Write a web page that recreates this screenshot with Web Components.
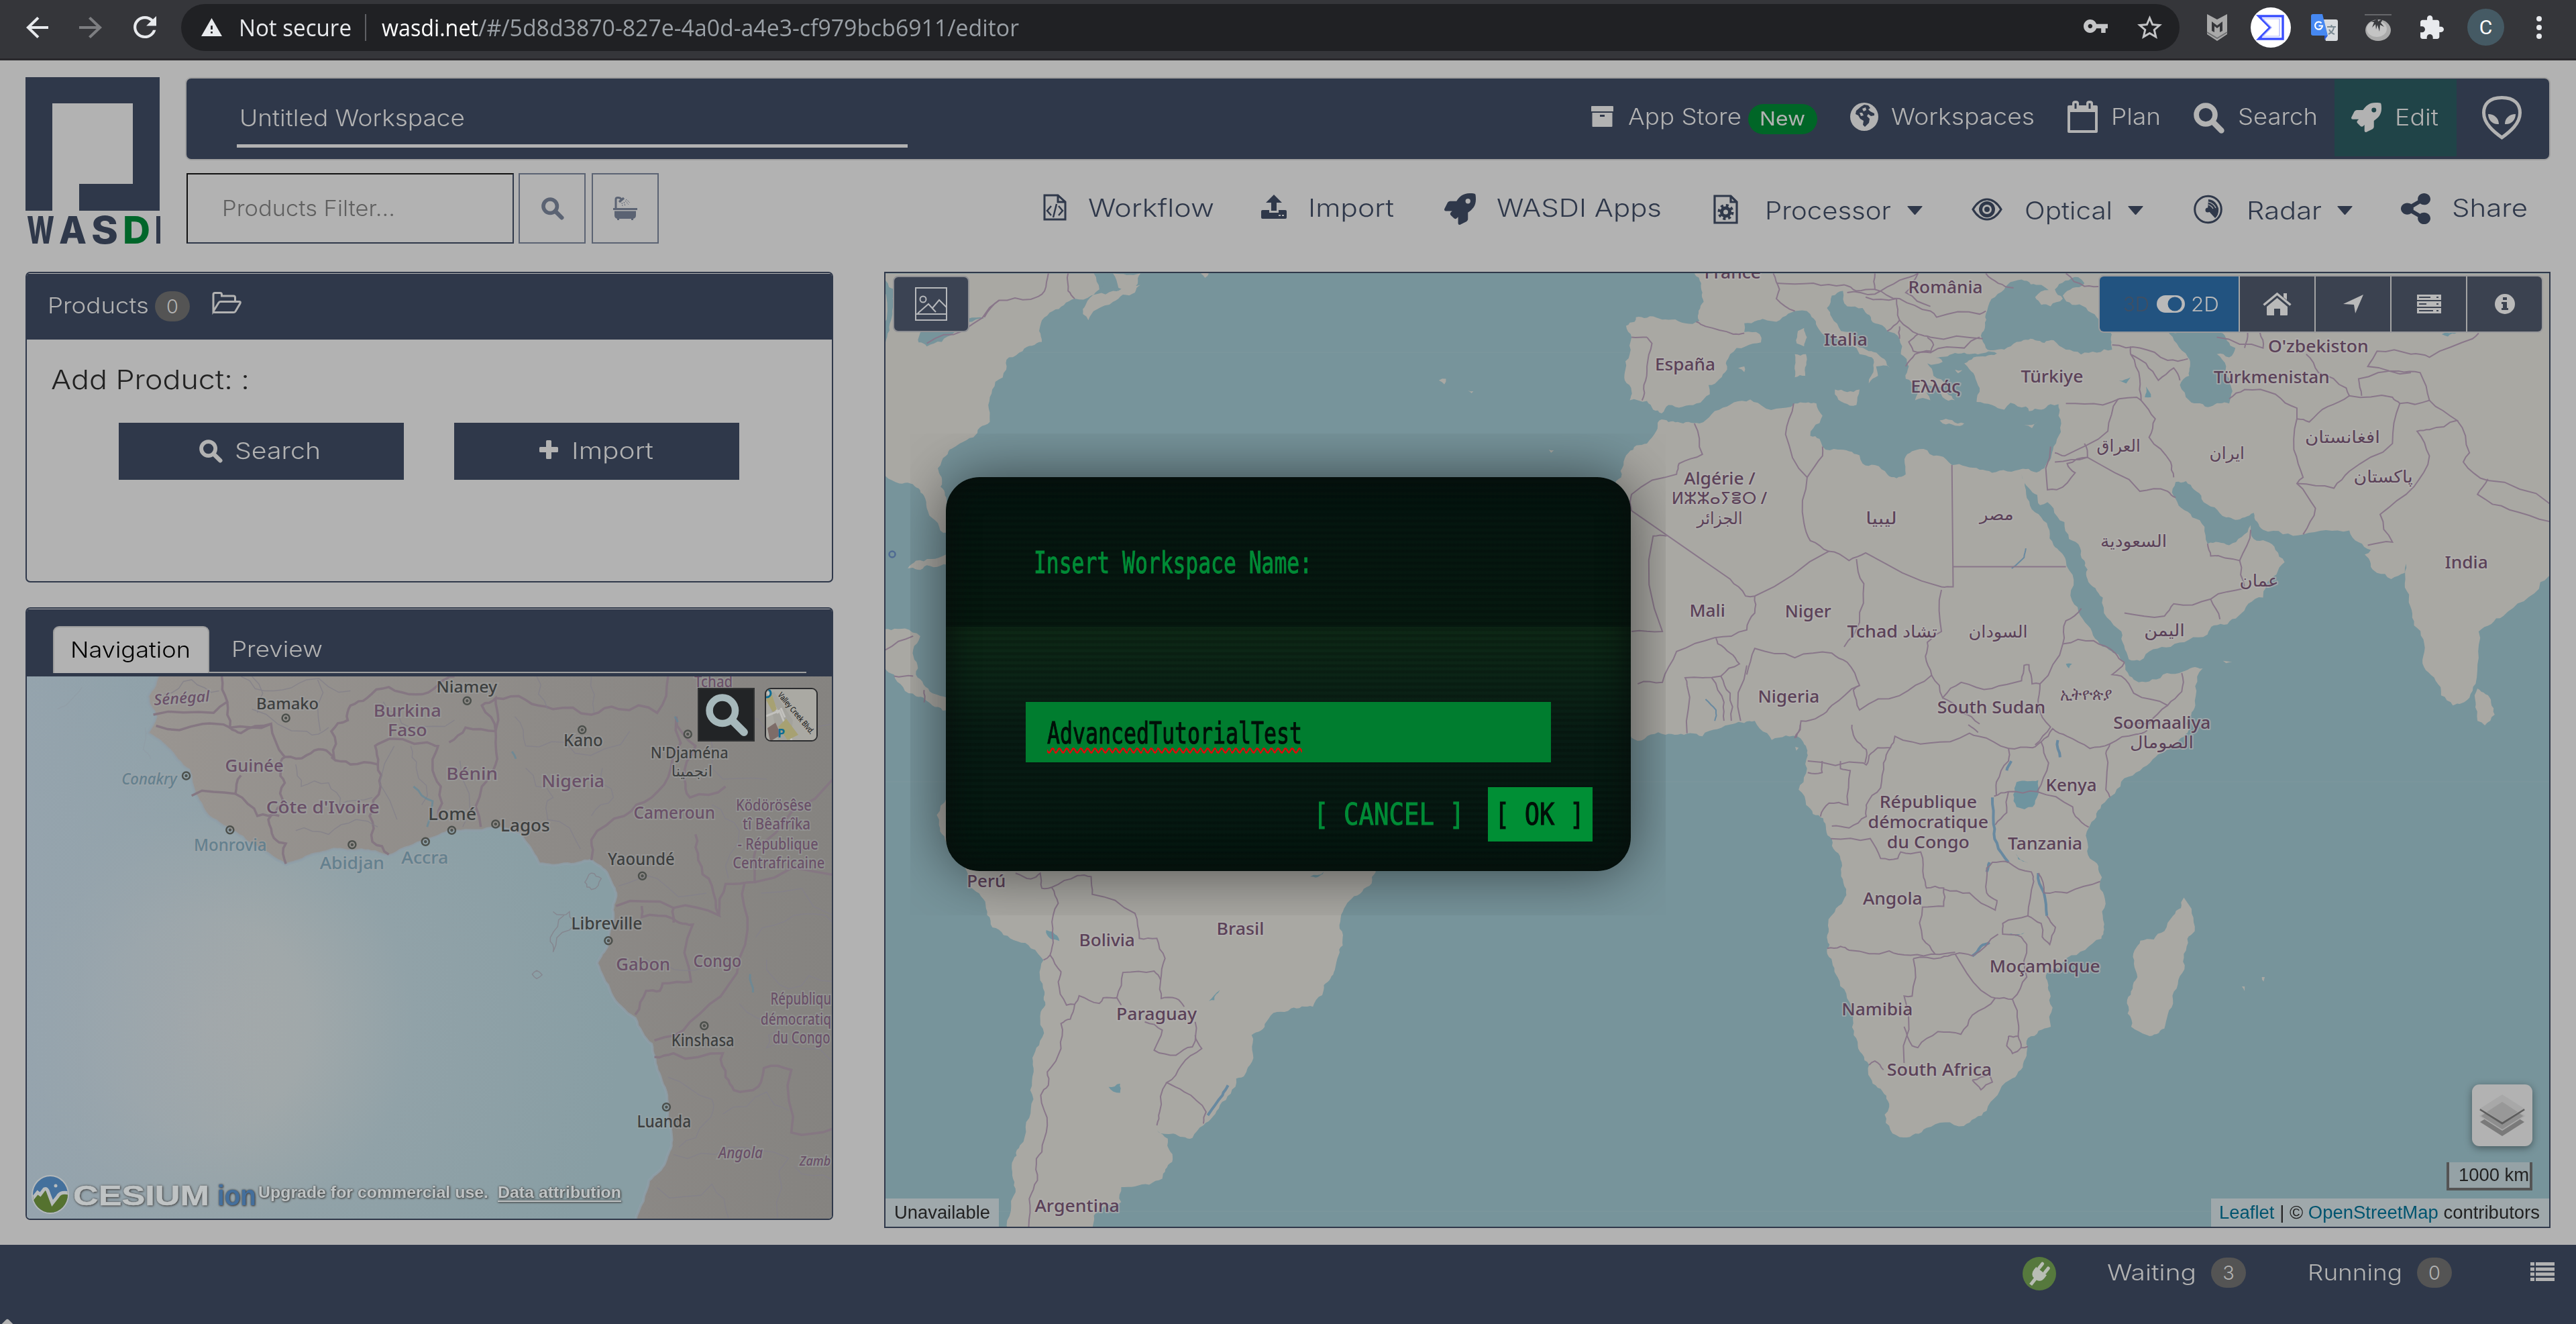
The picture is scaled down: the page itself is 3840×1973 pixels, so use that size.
<!DOCTYPE html>
<html lang="en"><head><meta charset="utf-8"><title>WASDI editor</title>
<style>html,body{margin:0;padding:0}body{width:3840px;height:1973px;overflow:hidden;background:#b2b2b2;font-family:Inter,"Liberation Sans",sans-serif}</style></head>
<body><wasdi-app></wasdi-app>
<script>
const def=(n,css,html,init)=>customElements.define(n,class extends HTMLElement{
  connectedCallback(){ if(this.shadowRoot)return; const r=this.attachShadow({mode:'open'});
    r.innerHTML='<style>*{box-sizing:border-box}'+css+'</style>'+(typeof html==='function'?html(this):html); if(init)init(this,r);}
});

/* Text stretched horizontally to a given width */
const fitted=new Set();
class FitText extends HTMLElement{
  connectedCallback(){ if(!this.shadowRoot){const r=this.attachShadow({mode:'open'});
    r.innerHTML='<style>:host{display:inline-block;flex:none;white-space:nowrap;line-height:1.2}span{display:inline-block;transform-origin:0 50%}</style><span><slot></slot></span>';}
    this.style.width=this.getAttribute('w')+'px'; fitted.add(this);}
  fit(){const s=this.shadowRoot.querySelector('span');s.style.transform='none';const w=s.getBoundingClientRect().width;
    if(w)s.style.transform='scaleX('+(this.getAttribute('w')/w)+')';}
}
customElements.define('fit-text',FitText);

/* Icon set: name -> [viewBox, markup] */
const ROCKET='<path fill="currentColor" d="M505.12 19.09c-1.19-5.53-6.66-11-12.2-12.18C460.7 0 435.5 0 410.4 0 307.18 0 245.27 55.2 199.05 128H94.84c-16.35 0-35.56 11.88-42.89 26.48L2.52 253.3A28.4 28.4 0 0 0 0 264a24 24 0 0 0 24 24h103.8l-22.46 22.47c-11.37 11.36-13 32.26 0 45.25l50.9 50.9c11.16 11.19 32.16 13.16 45.28 0L224 384.16V488a24 24 0 0 0 24 24 28.56 28.56 0 0 0 10.7-2.52l98.73-49.39c14.63-7.3 26.5-26.5 26.5-42.86V312.8c72.6-46.31 128.04-108.4 128.04-211.1 0-25.2 0-50.4-6.85-82.6ZM384.04 168A40 40 0 1 1 424 128a40 40 0 0 1-40 40Z"/>';
const SEARCH='<circle cx="40" cy="40" r="31" fill="none" stroke="currentColor" stroke-width="17"/><path d="M63 63L92 92" stroke="currentColor" stroke-width="19" stroke-linecap="round"/>';
const ICONS={
 back:['4 4 16 16','<path fill="currentColor" d="M20 11H7.83l5.59-5.59L12 4l-8 8 8 8 1.41-1.41L7.83 13H20v-2z"/>'],
 fwd:['4 4 16 16','<path fill="currentColor" d="M4 11h12.17l-5.59-5.59L12 4l8 8-8 8-1.41-1.41L16.17 13H4z"/>'],
 reload:['4 4 16 16','<path fill="currentColor" d="M17.65 6.35C16.2 4.9 14.21 4 12 4c-4.42 0-7.99 3.58-7.99 8s3.57 8 7.99 8c3.73 0 6.84-2.55 7.73-6h-2.08c-.82 2.33-3.04 4-5.65 4-3.31 0-6-2.69-6-6s2.69-6 6-6c1.66 0 3.14.69 4.22 1.78L13 11h7V4l-2.35 2.35z"/>'],
 warn:['1 2 22 19','<path fill="currentColor" d="M1 21h22L12 2 1 21zm12-3h-2v-2h2v2zm0-4h-2v-4h2v4z"/>'],
 key:['1 6 22 12','<path fill="currentColor" d="M12.65 10C11.83 7.67 9.61 6 7 6c-3.31 0-6 2.69-6 6s2.69 6 6 6c2.61 0 4.83-1.67 5.65-4H17v4h4v-4h2v-4H12.65zM7 14c-1.1 0-2-.9-2-2s.9-2 2-2 2 .9 2 2-.9 2-2 2z"/>'],
 star:['2 2 20 19','<path fill="currentColor" d="M22 9.24l-7.19-.62L12 2 9.19 8.63 2 9.24l5.46 4.73L5.82 21 12 17.27 18.18 21l-1.63-7.03L22 9.24zM12 15.4l-3.76 2.27 1-4.28-3.32-2.88 4.38-.38L12 6.1l1.71 4.04 4.38.38-3.32 2.88 1 4.28L12 15.4z"/>'],
 shield:['0 0 30 40','<path fill="#a9a9a9" d="M0 0L15 8 30 0V30L15 40 0 30Z"/><path fill="#35363a" d="M7 11L15 17 23 11V25L19 27V18L15 21 11 18V27L7 25Z"/><path d="M0 27l15 9 15-9" fill="none" stroke="#6f7072" stroke-width="2"/>'],
 sigma:['0 0 60 60','<circle cx="30" cy="30" r="30" fill="#fff"/><path d="M12 13H48V47H12L29 30Z" fill="none" stroke="#394eff" stroke-width="3.4"/><path d="M18 17H43V43H18L31 30Z" fill="none" stroke="#a9b2ff" stroke-width="1.2"/>'],
 trans:['0 0 40 40','<path fill="#d9dcdf" d="M14 8h23a3 3 0 0 1 3 3v26a3 3 0 0 1-3 3H22z"/><path fill="#4688f1" d="M3 0h14l8 32H3a3 3 0 0 1-3-3V3a3 3 0 0 1 3-3z"/><path fill="#2b59d6" d="M20 32h5l-5 7z"/><path d="M15.600 13.500A5.500 5.500 0 1 0 17 17.500H11.500" fill="none" stroke="#fff" stroke-width="2.200"/><path d="M24 19h13M30.500 16v3M34 20c-1 5-4 8-8 10M27 23c2 4 5 6 8 7" fill="none" stroke="#7b8b94" stroke-width="2"/>'],
 tomato:['0 0 40 40','<path d="M0 1h40" stroke="#77787b" stroke-width="1.500"/><ellipse cx="20" cy="24" rx="19" ry="16" fill="#aaa"/><ellipse cx="18" cy="22" rx="15" ry="12" fill="#c4c4c4"/><path d="M19 2l1 9 8-5-4 7 5 6-6-3-1 10-3-10-2 7-1-8-5 5 3-8-5-1 7-2z" fill="#3a3b3e"/>'],
 puzzle:['2 1 21 21','<path fill="currentColor" d="M20.500 11H19V7c0-1.100-.9-2-2-2h-4V3.500C13 2.120 11.880 1 10.500 1S8 2.120 8 3.500V5H4c-1.100 0-1.990.9-1.990 2v3.800H3.500c1.490 0 2.700 1.210 2.700 2.700s-1.210 2.700-2.700 2.700H2V20c0 1.100.9 2 2 2h3.800v-1.500c0-1.490 1.210-2.700 2.700-2.700 1.490 0 2.700 1.210 2.700 2.700V22H17c1.100 0 2-.9 2-2v-4h1.500c1.380 0 2.500-1.120 2.500-2.500S21.880 11 20.500 11z"/>'],
 dots:['0 0 8 34','<g fill="currentColor"><circle cx="4" cy="4" r="4"/><circle cx="4" cy="17" r="4"/><circle cx="4" cy="30" r="4"/></g>'],
 box:['0 0 33 31','<path fill="currentColor" fill-rule="evenodd" d="M0 1Q0 0 1 0H32Q33 0 33 1V8H0ZM1.500 10H31.500V30Q31.500 31 30.500 31H2.500Q1.500 31 1.500 30ZM13 13V16H20V13Z"/>'],
 globe:['0 0 42 42','<circle cx="21" cy="21" r="21" fill="currentColor"/><path fill="#2f384a" d="M16 6L21 3 27 4 30 8 27 10 30 13 36 16 36 19 31 20 27 17 25 20 29 24 28 30 22 36 19 33 20 27 15 24 12 19 8 17 9 12Z"/><path fill="currentColor" d="M18 9L23 7 24 11 20 13ZM14 15L18 15 20 19 16 20Z"/>'],
 cal:['0 0 45 48','<path fill="currentColor" fill-rule="evenodd" d="M2 7H7V4Q7 0 12 0 17 0 17 4V7H28V4Q28 0 33 0 38 0 38 4V7H43Q45 7 45 9V46Q45 48 43 48H2Q0 48 0 46V9Q0 7 2 7ZM4 17V44H41V17ZM10.500 4V12H13.500V4ZM31.500 4V12H34.500V4Z"/>'],
 search:['0 0 100 100',SEARCH], rocket:['0 0 512 512',ROCKET],
 alien:['0 0 59 65','<path d="M29.500 2.500C10 2.500 2.500 13 2.500 25 2.500 41 17 53 29.500 62 42 53 56.500 41 56.500 25 56.500 13 49 2.500 29.500 2.500Z" fill="none" stroke="currentColor" stroke-width="5"/><path d="M9 27C18 27 25 33 25 42 16 43 9 36 9 27ZM50 27C41 27 34 33 34 42 43 43 50 36 50 27Z" fill="currentColor"/>'],
 bath:['0 0 36 35','<g fill="none" stroke="currentColor"><path d="M4 18V4Q4 1.500 7 1.500 11 1.500 12 4" stroke-width="3"/><path d="M9 8L16 2" stroke-width="3.500"/><path d="M13 9l1 5M16 8l2 6M18 6l5 6M19 4l6 5" stroke-width="1" stroke-dasharray="2 1.500"/></g><path fill="currentColor" d="M0 17H36V20H0ZM2 21.500H34V28Q34 32 30 33V35H27V33H9V35H6V33Q2 32 2 28Z"/>'],
 code:['0 0 35 40','<path d="M2 2H22L33 12V38H2ZM22 2V12H33" fill="none" stroke="currentColor" stroke-width="3"/><path d="M12 18l-6 7 6 7M23 18l6 7-6 7M20 15l-5 20" fill="none" stroke="currentColor" stroke-width="2.500"/>'],
 upload:['0 0 38 36','<path fill="currentColor" fill-rule="evenodd" d="M19 0L31 12H23V24H15V12H7ZM2 23H12V27H26V23H36Q38 23 38 25V34Q38 36 36 36H2Q0 36 0 34V25Q0 23 2 23ZM26 30V32H29V30ZM31 30V32H34V30Z"/>'],
 gearfile:['0 0 37 44','<path d="M2 2H26L35 11V42H2ZM26 2V11H35" fill="none" stroke="currentColor" stroke-width="3.200"/><circle cx="18.500" cy="26" r="6" fill="none" stroke="currentColor" stroke-width="5"/><circle cx="18.500" cy="26" r="10" fill="none" stroke="currentColor" stroke-width="4" stroke-dasharray="4 3.850"/>'],
 eye:['0 0 46 34','<path d="M2 17Q11 2 23 2 35 2 44 17 35 32 23 32 11 32 2 17Z" fill="none" stroke="currentColor" stroke-width="3.200"/><circle cx="23" cy="17" r="9.500" fill="none" stroke="currentColor" stroke-width="5"/><circle cx="23" cy="17" r="4" fill="currentColor"/>'],
 radar:['0 0 43 44','<circle cx="21.500" cy="22" r="19.800" fill="none" stroke="currentColor" stroke-width="3"/><path fill="currentColor" d="M21 23L22 7Q33 8 37 20 38 30 32 35Z"/><g fill="none" stroke="#b2b2b2" stroke-width="1.200"><path d="M22 11Q30 13 33 20M22 15Q27 17 29 21"/></g><circle cx="21" cy="23" r="3.500" fill="currentColor"/>'],
 share:['0 0 448 512','<path fill="currentColor" d="M352 320c-22.608 0-43.387 7.819-59.790 20.895l-102.486-64.054a96.551 96.551 0 0 0 0-41.683l102.486-64.054C308.613 184.181 329.392 192 352 192c53.019 0 96-42.981 96-96S405.019 0 352 0s-96 42.981-96 96c0 7.158.790 14.130 2.276 20.841L155.790 180.895C139.387 167.819 118.608 160 96 160c-53.019 0-96 42.981-96 96s42.981 96 96 96c22.608 0 43.387-7.819 59.790-20.895l102.486 64.054A96.301 96.301 0 0 0 256 416c0 53.019 42.981 96 96 96s96-42.981 96-96-42.981-96-96-96z"/>'],
 caret:['0 0 23 13','<path fill="currentColor" d="M1 0H22Q23 0 22.500 1L12.500 12.500Q11.500 13.500 10.500 12.500L.5 1Q0 0 1 0Z"/>'],
 folder:['0 0 44 32','<path d="M2 29V4Q2 1.500 4.500 1.500H12Q14.500 1.500 14.500 4V6H32Q34.500 6 34.500 8.500V14M2 29L10 16Q11 14.500 13 14.500H41Q43 14.500 42 17L35 29Q34 30.500 32 30.500H4Q2 30.500 2 28Z" fill="none" stroke="currentColor" stroke-width="3"/>'],
 plus:['0 0 28 28','<path fill="currentColor" d="M10 1.500Q10 0 11.500 0H16.500Q18 0 18 1.500V10H26.500Q28 10 28 11.500V16.500Q28 18 26.500 18H18V26.500Q18 28 16.500 28H11.500Q10 28 10 26.500V18H1.500Q0 18 0 16.500V11.500Q0 10 1.500 10H10Z"/>'],
 picture:['0 0 48 50','<g fill="none" stroke="currentColor" stroke-width="2"><path d="M1 1H47V49H1ZM1 40H47M4 39L20 25 31 37M26 31L36 19 47 30"/><circle cx="12" cy="18" r="4.500"/></g>'],
 toggle:['0 0 42 26','<rect width="42" height="26" rx="13" fill="currentColor"/><circle cx="27" cy="13" r="10.500" fill="#225380"/>'],
 home:['0 0 43 34','<path fill="currentColor" d="M21.500 8L37 21V33Q37 34 36 34H26V24H17V34H7Q6 34 6 33V21Z"/><path d="M1.500 18.500L21.500 2 41.500 18.500" fill="none" stroke="currentColor" stroke-width="3.500"/><path fill="currentColor" d="M31 1H36V11L31 7Z"/>'],
 locate:['0 0 30 28','<path fill="currentColor" d="M30 0L18 28 16 15 0 14Z"/>'],
 server:['0 0 36 28','<path fill="currentColor" fill-rule="evenodd" d="M0 0H36V8H0ZM0 10H36V18H0ZM0 20H36V28H0ZM3 3H20V5H3ZM3 13H14V15H3ZM3 23H24V25H3ZM29 3H32V5H29ZM29 13H32V15H29ZM29 23H32V25H29Z"/>'],
 info:['0 0 30 30','<circle cx="15" cy="15" r="15" fill="currentColor"/><path fill="#3b4250" d="M12 5H18V9H12ZM10 12H18V21H20V24H10V21H12V15H10Z"/>'],
 layers:['0 0 66 62','<path d="M33 20L66 41 33 62 0 41Z" fill="#7a7a7a"/><path d="M33 11L66 32 33 53 0 32Z" fill="#8e8e8e" stroke="#a9a9a9" stroke-width="1.500"/><path d="M0 22L33 43 66 22" fill="none" stroke="#5d5d5d" stroke-width="3"/><path d="M33 0L66 21 33 41 0 21Z" fill="#a8a8a8"/><path d="M33 11L56 26 33 41 10 26Z" fill="#989898"/>'],
 plug:['0 0 50 50','<circle cx="25" cy="25" r="25" fill="#56793d"/><g transform="rotate(38 25 25)" fill="#b8bdb4"><path d="M15 20H35V25Q35 34 27.500 35V46H22.500V35Q15 34 15 25Z"/><rect x="17" y="8" width="5" height="13" rx="2.500"/><rect x="28" y="8" width="5" height="13" rx="2.500"/></g>'],
 list:['0 0 36 28','<path fill="currentColor" d="M0 0H6V5H0ZM0 7.700H6V12.700H0ZM0 15.300H6V20.300H0ZM0 23H6V28H0ZM8 0H36V5H8ZM8 7.700H36V12.700H8ZM8 15.300H36V20.300H8ZM8 23H36V28H8Z"/>'],
 cesium:['0 0 56 58','<clipPath id="c"><ellipse cx="28" cy="29" rx="26" ry="27"/></clipPath><ellipse cx="28" cy="29" rx="28" ry="29" fill="#b5b9ba"/><g clip-path="url(#c)"><rect width="56" height="58" fill="#44709c"/><path d="M0 34L10 24 14 28 20 20 30 44 38 32 56 24V58H0Z" fill="#55722f"/><path d="M0 37L9 26 13 29 19 21Q23 19 25 26L31 42 39 32Q43 24 56 27" fill="none" stroke="#b8bcbd" stroke-width="5"/></g><circle cx="36" cy="16" r="2.500" fill="#b8bcbd"/>'],
 tile:['0 0 80 80','<rect width="80" height="80" fill="#aaa9a3"/><path d="M0 10L14 6 42 48 38 80H20L12 40Z" fill="#a3a29c"/><path d="M4 6L20 38M2 42L22 34 40 78M24 30L30 44" stroke="#c2c1bd" stroke-width="3" fill="none"/><path d="M2 18L10 8 18 32 12 36Z" fill="#a7a172"/><path d="M20 58L32 46 50 70 34 78Z" fill="#a7a172"/><path d="M4 60L16 52 24 70 8 80Z" fill="#7d6c68"/><circle cx="3" cy="8" r="6" fill="none" stroke="#0f6d94" stroke-width="3"/>']
};
def('ui-icon',':host{display:block;flex:none}svg{display:block;width:100%;height:100%;overflow:visible}',
 e=>{const [w,h]=e.getAttribute('size').split('x');e.style.width=w+'px';e.style.height=h+'px';const i=ICONS[e.getAttribute('name')];
 return `<svg viewBox="${i[0]}" preserveAspectRatio="none">${i[1]}</svg>`});
const ic=(n,s,ml=0,mt=0,extra='')=>`<ui-icon name="${n}" size="${s}" style="margin:${mt}px 0 0 ${ml}px;${extra}"></ui-icon>`;
const tx=(t,w,ml=0,mt=0,extra='')=>`<fit-text w="${w}" style="margin:${mt}px 0 0 ${ml}px;${extra}">${t}</fit-text>`;

def('count-badge',':host{display:flex;flex:none;align-items:center;justify-content:center;width:52px;height:45px;border-radius:23px;background:#545454;color:#b2b2b2;font-size:29px}','<slot></slot>');

def('browser-bar',`:host{display:flex;height:90px;padding:0 51px 6px 39px;align-items:center;background:#35363a;border-bottom:3px solid #29282c;color:#e8eaed;font-family:"Open Sans","Noto Sans",sans-serif}
 .addr{display:flex;align-items:center;width:2980px;height:70px;margin:0 0 0 37px;border-radius:35px;background:#202124;font-size:34px;padding-left:30px}
 .sep{width:2px;height:40px;background:#5f6064;margin-left:20px}.c{display:flex;align-items:center;justify-content:center;width:55px;height:55px;border-radius:50%;background:#455a64;color:#fff;font:30px Roboto,sans-serif;margin-left:35px}`,
 ic('back','33x32')+ic('fwd','34x32',46,0,'color:#7d7e81')+ic('reload','34x33',47)+
 `<div class="addr">${ic('warn','31x27',0)}${tx('Not secure',168,25,2)}<span class="sep"></span>${tx('wasdi.net',144,23,2,'color:#fff')}${tx('/#/5d8d3870-827e-4a0d-a4e3-cf979bcb6911/editor',806,0,2,'color:#9aa0a6')}${ic('key','36x20',1587,-3,'color:#c4c5c7')}${ic('star','37x35',44,0,'color:#c4c5c7')}</div>`+
 ic('shield','30x40',41)+ic('sigma','60x60',35)+ic('trans','40x40',30)+ic('tomato','40x40',40)+ic('puzzle','35x35',43)+`<span class="c">C</span>`+ic('dots','8x34',48));

def('brand-logo',`:host{display:flex;flex-direction:column;width:200px;gap:10px;flex:none}svg{display:block}.w{display:flex;gap:7px;height:40px;align-items:center;padding-left:2px;font:800 56px Inter,sans-serif;color:#2f384a}`,
 `<svg width="200" height="199"><path fill="#2f384a" fill-rule="evenodd" d="M0 0H200V199H80V159H160V39H40V199H0Z"/></svg><div class="w">${tx('W',41)}${tx('A',41)}${tx('S',40)}${tx('D',41,0,0,'color:#00662a')}${tx('I',10)}</div>`);

def('top-nav',`:host{display:flex;height:124px;width:3526px;padding:0 38px 0 75px;background:#2f384a;border:2px solid #a0a0a0;border-radius:9px;color:#b2b2b2;font-size:33.500px;font-weight:300;align-items:center}
 .name{width:1000px;flex:none;height:97px;display:flex;align-items:center;border-bottom:5px solid #b2b2b2;padding:0 0 0 4px;margin:-11px 0 0 0}
 .row{display:flex;align-items:center;height:100%;margin-left:1019px}.new{display:flex;align-items:center;background:#006627;border-radius:23px;width:103px;height:45px;margin-left:10px;font-size:29px;font-weight:400}
 .edit{display:flex;align-items:center;width:182px;height:115px;background:#204448;margin:-4px 0 0 25px}`,
 `<div class="name">${tx('Untitled Workspace',336,0,14)}</div><div class="row">${ic('box','33x31',0,-8)}${tx('App Store',169,22,-6)}<span class="new">${tx('New',68,17)}</span>${ic('globe','42x42',49,-6)}${tx('Workspaces',214,19,-6)}${ic('cal','45x48',49,-6)}${tx('Plan',74,20,-6)}${ic('search','45x45',49,-4)}${tx('Search',119,21,-6)}<span class="edit">${ic('rocket','45x44',25)}${tx('Edit',65,20,0)}</span>${ic('alien','59x65',38,-4)}</div>`);

def('filter-bar',`:host{display:flex;height:105px;width:705px;gap:7px;font-weight:300;margin-left:2px}.in{width:488px;border:2px solid #2f384a;border-top-color:#111;border-left-color:#111;padding-left:51px;display:flex;align-items:center;color:#606060;font-size:33px}
 .b{width:100px;border:2px solid #5b6373;display:flex;align-items:center;justify-content:center;color:#5b6373}`,
 `<div class="in">${tx('Products Filter...',258)}</div><div class="b">${ic('search','33x33')}</div><div class="b" style="margin-left:2px">${ic('bath','36x35')}</div>`);

def('tool-bar',`:host{display:flex;height:105px;align-items:center;color:#2f384a;font-size:37px;font-weight:300}`,
 ic('code','35x40',0,-3)+tx('Workflow',188,32)+ic('upload','38x36',70,-5)+tx('Import',128,32)+ic('rocket','47x47',75,1)+tx('WASDI Apps',246,31)+
 ic('gearfile','37x44',77,3)+tx('Processor',188,40,8)+ic('caret','23x13',24,6)+ic('eye','46x34',73,3)+tx('Optical',131,33,8)+ic('caret','23x13',23,6)+ic('radar','43x44',75,3)+tx('Radar',112,36,8)+ic('caret','23x13',23,6)+ic('share','44x46',72)+tx('Share',113,32));

def('side-card',`:host{display:flex;flex-direction:column;width:1204px;border:2px solid #2f384a;border-radius:7px;overflow:hidden}.h{display:flex;background:#2f384a;border-top:1px solid #b2b2b2;color:#b2b2b2;flex:none}`,
 `<div class="h"><slot name="head"></slot></div><slot></slot>`);

def('products-head',`:host{display:flex;height:98px;padding:0 0 6px 31px;align-items:center;font-size:33px;font-weight:300}count-badge{margin:4px 0 0 9px}`,
 tx('Products',151,0,4)+'<count-badge>0</count-badge>'+ic('folder','44x32',33,-7));
def('products-body',`:host{display:flex;flex-direction:column;flex:1;padding:36px 0 0 36px;color:#222;font-size:40px;font-weight:300;gap:40px}.r{display:flex;gap:75px;padding-left:101px}
 .b{display:flex;align-items:center;width:425px;height:85px;background:#2f384a;color:#b2b2b2;font-size:34px}`,
 tx('Add Product: :',296)+`<div class="r"><div class="b">${ic('search','34x34',120,-2)}${tx('Search',128,19)}</div><div class="b">${ic('plus','28x28',127,-6)}${tx('Import',122,20)}</div></div>`);

def('nav-head',`:host{display:flex;width:1162px;height:100px;align-items:flex-end;font-size:33px;font-weight:300;padding:0 0 5px 39px}.t{width:233px;height:70px;background:#b2b2b2;border:2px solid #9d9d9d;border-bottom:0;border-radius:9px 9px 0 0;color:#000;display:flex;align-items:center;padding-left:24px}
 .o{flex:1;height:70px;display:flex;align-items:center;border-bottom:2px solid #a0a0a0;padding-left:33px}`,
 `<div class="t">${tx('Navigation',179)}</div><div class="o">${tx('Preview',136,0,2)}</div>`);

/* Survey grids: origin and unit size of each, in page pixels */
const GRID={5:[0,980,.8163,.5485],6:[1300,390,.8163,.4592],7:[2400,390,.9184,.4592],8:[1300,1080,.8163,.4974],9:[2500,1080,.8546,.5695]};
const at=(g,x,y)=>[GRID[g][0]+GRID[g][2]*x,GRID[g][1]+GRID[g][3]*y];
const parse=s=>s.split('|').flatMap(p=>{const [g,r]=p.split(':');return r.trim().split(/\s+/).map(q=>at(g.trim(),...q.split(',').map(Number)))});
let seed=7;const rnd=()=>(seed=(seed*16807)%2147483647)/2147483647-.5;
const rough=(p,k,n,closed)=>{for(let j=0;j<n;j++){const o=[];for(let i=0;i<p.length-(closed?0:1);i++){const a=p[i],b=p[(i+1)%p.length],dx=b[0]-a[0],dy=b[1]-a[1],r=rnd()*k;
  o.push(a);if(Math.hypot(dx,dy)>7&&Math.hypot(dx,dy)<160)o.push([(a[0]+b[0])/2-dy*r,(a[1]+b[1])/2+dx*r]);}if(!closed)o.push(p[p.length-1]);p=o;}return p;};
const dd=p=>'M'+p.map(q=>q[0].toFixed(1)+' '+q[1].toFixed(1)).join('L');
const land=(s,f='#a9a8a3',k=.32)=>`<path d="${dd(rough(parse(s),k,3,true))}Z" fill="${f}"/>`;
const line=(s,k=.2,st='')=>`<path d="${dd(rough(parse(s),k,2,false))}" ${st}/>`;
const label=(g,x1,x2,y,t,st='')=>{const a=at(g,x1,y),b=at(g,x2,y);return `<text x="${a[0].toFixed(1)}" y="${a[1].toFixed(1)}" textLength="${(b[0]-a[0]).toFixed(1)}" lengthAdjust="spacingAndGlyphs" ${st}>${t}</text>`};

def('world-map',`:host{display:block;position:relative;width:2484px;height:1425px;border:2px solid #2f384a;overflow:hidden;background:#77949b}
 svg.m{display:block;width:2480px;height:1421px}text{font:500 25px "Noto Sans","DejaVu Sans",sans-serif;fill:#5b4158;stroke:#b4b2b1;stroke-width:4px;stroke-opacity:.6;paint-order:stroke;stroke-linejoin:round}
 .ov{position:absolute;display:flex;align-items:center}.btns{left:1808px;top:3px;height:86px;border:2px solid #9a9a9c;border-radius:8px;overflow:hidden;gap:2px;background:#a4a4a4;color:#b9b9b9}
 .btns>div{display:flex;align-items:center;justify-content:center;width:111px;height:82px;background:#3b4250}.btns>.bl{width:207px;background:#225380;font-size:30px;font-weight:300;justify-content:flex-start}
 .pic{left:11px;top:4px;width:114px;height:84px;border:2px solid #8f9094;border-radius:8px;background:#3b4353;color:#b6b8bb;justify-content:center}
 .lay{left:2365px;top:1209px;width:90px;height:92px;border-radius:11px;background:#b2b2b2;justify-content:center;box-shadow:0 3px 12px rgba(0,0,0,.4)}
 .sc{left:2327px;top:1325px;width:128px;height:42px;border:4px solid #545454;border-top:0;background:#95a2a6;color:#222;font:27px "Liberation Sans",sans-serif;padding-left:14px}
 .at{right:0;bottom:0;width:504px;height:42px;background:#9fa8ab;color:#222;font:27px "Liberation Sans",sans-serif;padding-left:12px}.at b{font-weight:400;color:#00546f}
 .un{left:0;bottom:0;width:169px;height:42px;background:#9fa8ab;color:#222;font:27px "Liberation Sans",sans-serif;padding-left:13px}`,
 ()=>`<svg class="m" viewBox="1320 407 2480 1421">
 <path d="M1320 525H3800M1320 1165H3800M1320 1805H3800" stroke="#7f979d" stroke-width="1"/>
 ${land('7:137,38 148,70 152,130 145,192 100,188 60,182 42,180 40,195 26,208 35,245 32,300 25,350 24,385 35,420 32,450 60,452 70,480 84,492 95,465 140,460 162,430 160,400 190,350 188,330 195,300 220,275 245,262 243,235 218,228 218,200 240,190 270,195 280,180 300,160 312,158 325,170 345,235 375,260 400,280 405,300 425,310 428,345 420,395 435,370 432,340 455,345 448,322 420,290 400,270 395,240 375,225 360,180 352,150 360,110 378,95 385,145 410,150 430,200 450,225 470,250 472,300 485,340 480,380 500,400 495,450 520,450 515,400 545,405 525,370 515,330 540,325 525,308 555,300 575,295 610,295 628,298 590,310 575,330 580,340 592,370 600,410 595,455 620,465 640,480 650,458 675,470 680,485 700,480 715,462 728,462 728,500 720,600 705,670 670,672 620,685 600,675 555,660 545,640 525,630 515,612 490,615 478,640 480,690 465,703 450,690 430,660 410,655 405,628 370,610 345,600 340,575 325,565 330,540 345,500 335,460 300,460 240,458 190,470 165,495 145,525 110,520 80,515 75,550 60,590 30,620 22,660 18,700 5,730 -60,900 -60,1400 35,1545 45,1555 90,1535 130,1530 150,1540 200,1500 235,1490 255,1530|9:165,40 215,35 228,80 212,170 225,210 255,245 270,300 287,360 295,430 290,460 275,490 262,550 262,600 280,660 305,750 315,830 335,890 350,950 370,1000 362,1020 372,1060 395,1080 435,1055 500,1050 540,1010 580,930 605,880 612,820 652,790 655,740 650,700 645,650 680,610 740,560 743,510 738,430 735,370 720,350 718,270 740,210 780,140 830,90 870,50 895,10|7:935,1500 950,1440 962,1320 930,1330 880,1355 858,1365 843,1345 835,1300 810,1260 780,1190 750,1100 740,970 720,920 700,830 675,740 668,690 680,735 698,790 710,780 720,800 745,900 770,970 775,1030 800,1090 830,1200 842,1290 860,1295 910,1250 970,1210 980,1180 1020,1150 1060,1090 1065,1050 1095,975 1080,935 1045,900 1040,855 1005,920 970,915 965,860 945,830 915,760 918,715 935,712 960,770 1000,830 1030,830 1045,815 1060,870 1125,885 1200,872 1215,910 1235,935 1225,950 1245,1010 1268,1030 1290,1010 1292,980 1297,1080 1305,1180 1320,1280 1340,1360 1368,1440 1395,1415 1405,1370 1410,1200 1450,1150 1510,1040 1530,1000 1540,38')}
 ${land('7:645,75 668,58 700,75 712,92 690,115 700,140 715,145 735,120 722,90 760,50 770,70 735,110 750,140 790,180 812,220 815,285 790,295 740,285 720,255 690,255 660,260 640,285 610,280 602,240 610,170 640,90','#77949b')}
 ${land('7:905,225 950,205 990,230 1015,280 1005,310 985,300 1000,340 1005,380 1005,460 975,470 940,450 925,400 940,370 938,310 920,265','#77949b')}
 ${['365,415 405,415 400,465 365,430','300,300 318,300 317,370 300,375','305,225 315,215 315,275 303,265','535,515 575,525 560,532 540,525','672,530 695,518 685,540','208,345 218,340 218,358','1408,1385 1430,1430 1436,1470 1420,1505 1408,1490 1405,1430','530,415 560,450 540,440','560,350 572,352 565,362','995,1295 1010,1300 1000,1303'].map(s=>land('7:'+s)).join('')}
 ${land('9:884,452 903,540 890,560 885,640 865,720 850,795 820,812 792,790 785,720 803,660 798,590 808,565 850,540 865,500')}
 ${land('9:985,685 990,685 990,697')}${land('9:1020,660 1025,660 1023,672')}${land('9:206,58 212,60 208,68')}
 ${land('6:24,38 405,38 415,90 400,110 370,120 330,160 310,190 305,225 310,260 275,290 250,310 245,350 225,390 215,440 215,490 215,520 185,570 160,590 135,630 120,670 125,730 135,790 145,880 130,880 100,800 95,760 70,720 50,720 24,695 0,600 0,38')}
 ${land('6:440,95 490,75 480,100 440,130 410,155 395,190 385,170 390,140')}${land('6:430,38 470,38 490,45 450,95 420,80','#77949b')}${land('6:440,38 490,38 470,95 450,85')}
 ${land('6:10,60 24,60 42,100 36,180 24,265 10,260','#77949b')}${land('6:88,230 175,185 205,185 150,230 100,275 85,262','#77949b')}
 ${land('6:65,995 80,970 135,950 150,985 100,985')}${land('6:10,1190 60,1190 88,1215 75,1260 80,1340 110,1400 150,1410 150,1460 110,1440 80,1410 40,1340 10,1290')}
 ${['1035,385 1048,380 1045,398','1088,418 1098,420 1095,427','1236,610 1245,612 1240,620','600,38 615,38 608,52'].map(s=>land('6:'+s)).join('')}
 ${land('8:140,190 122,300 140,370 170,430 190,500 210,570 240,630 290,670 313,705 315,800 308,860 305,960 295,1040 290,1150 270,1260 255,1320 262,1400 250,1515 405,1515 405,1470 455,1430 455,1385 480,1383 530,1360 548,1310 545,1280 540,1240 520,1215 550,1225 585,1238 605,1200 635,1140 665,1060 690,1020 693,930 720,890 765,850 805,845 822,810 825,780 845,735 852,690 860,630 862,550 895,500 920,440 900,300')}
 ${['8:318,615 330,620 342,648 325,640','8:432,1085 453,1075 453,1103','9:592,150 630,145 630,182 620,215 592,215','7:1350,235 1375,230 1360,243','7:740,1305 750,1305 745,1320','8:615,828 635,795 625,825','7:870,405 878,440 868,440','7:826,385 845,375 838,395','8:800,455 825,440 810,458','9:575,548 606,544 590,550','9:590,336 612,362 595,352'].map(s=>land(s,'#6f949f')).join('')}
 <g fill="none" stroke="#6889a0" stroke-width="4">${line('9:550,190 552,260 558,310 578,360')}${line('9:630,388 640,440 645,500')}${line('9:515,605 530,580 545,570')}${line('9:664,40 668,85')}${line('9:575,120 583,95')}${line('9:540,385 545,360')}${line('7:652,995 672,960 675,930',.2,'stroke-width="2"')}${line('7:155,1420 172,1455 170,1490',.2,'stroke-width="2"')}${line('8:613,1170 640,1110 650,1080')}</g>
 <g fill="none" stroke="#89778a" stroke-width="2">
 ${['7:137,525 150,625 112,655 108,690 35,755 35,808 195,1030 220,1085 235,1085 355,940 325,905 315,850 320,700 285,560 298,460','7:345,600 345,630 320,700','7:555,660 557,1055 538,1055 415,945 388,970 355,940','7:538,1065 538,1200 515,1235 512,1280 522,1342 470,1408 405,1455 395,1390 405,1375 385,1300 360,1270 300,1285 235,1255 222,1340','7:557,990 740,990','7:400,965 412,1045 405,1170 380,1250','7:235,1085 235,1140 222,1195 170,1220 108,1265 85,1365 45,1370','7:35,1200 85,1200 70,890 92,890','7:125,1375 122,1350 180,1345 210,1305 195,1270 175,1240 172,1222','7:125,1375 125,1530','7:165,1350 185,1430 185,1490','7:180,1345 195,1400 197,1490','7:222,1310 212,1490','7:405,1375 360,1440 340,1475 310,1490 302,1545','7:522,1342 540,1415 570,1365 620,1385 668,1360 672,1310 680,1308 685,1370 698,1370','7:540,1415 570,1465 600,1500','7:698,1370 735,1240 740,1165 765,1125','7:735,1240 785,1230 820,1270 835,1300','7:698,1370 695,1440 715,1510 690,1568','7:835,1300 815,1340 830,1345 850,1400 905,1440 928,1395 928,1335','7:905,1440 875,1500 830,1510','7:740,460 800,465 855,440 862,450','7:825,445 808,550 738,630 722,620','7:862,450 885,510 875,570 910,650 915,700','7:722,650 775,635 770,590','7:775,635 860,745 905,745 918,765','7:775,635 742,655 755,685 725,740 710,740 715,600','7:970,915 975,955 1022,970 1040,870','7:1022,970 1030,1060 975,1095 915,1110 900,1150 835,1140','7:975,1095 990,1160','7:1005,445 1030,415 1080,430 1115,475 1110,610 1125,700 1115,720 1145,800 1125,885','7:1115,510 1135,520 1165,470 1200,435 1270,440 1282,460 1330,450 1375,515 1330,545 1310,550 1330,630 1305,730 1250,820 1270,910 1230,920','7:1282,460 1270,590 1200,680 1175,735 1115,720','7:1330,450 1315,360 1280,355 1215,380 1220,435','7:1375,515 1395,620 1385,650 1425,710 1525,785','7:1425,705 1408,755 1460,805 1525,843','7:1200,435 1195,410 1150,360 1130,300','7:1300,360 1230,340 1245,290 1300,300 1330,310 1400,250 1410,232','7:815,270 860,280 905,320 938,315','7:862,450 860,380 845,300 870,330 890,385 915,345 925,385','7:845,300 845,275','7:60,245 68,265 60,340 55,400 52,450','7:35,245 60,245','7:140,195 155,210 200,235 218,232','7:265,38 275,90 270,120 300,160','7:270,70 330,70 380,75 400,95 430,90 430,38','7:385,100 430,105 470,60 500,38','7:430,90 470,120 520,160 530,180 600,170 610,160','7:415,115 465,120 470,190 450,225','7:470,190 500,235 520,245 605,250','7:500,235 485,260 492,290 520,295 525,270 515,245','7:470,250 470,210','7:520,295 575,280 600,245','7:500,38 480,100 520,145','7:610,38 630,70 655,85','7:740,38 770,80 800,85','7:480,340 495,300 520,290','7:1035,230 1030,280','7:1055,230 1060,280 985,245','6:322,38 315,95 290,122 232,125 205,180','6:358,38 358,95 370,120','6:232,125 165,225 100,265','8:262,445 290,462 307,445 310,490 328,487 375,452 400,455 402,508 480,565 488,640 520,640 535,700 527,765 528,820 555,820 570,845','8:328,487 340,535 330,610 330,640 325,690 313,705','8:325,690 345,740 340,770 355,840 370,838 378,812 415,835 422,818 447,818 455,840','8:447,818 458,742 515,738 527,765','8:370,838 362,882 345,895 345,970 320,1040 322,1080 308,1110 320,1200 310,1280 300,1300 302,1365 287,1420 286,1504','8:498,890 530,915 515,975 555,990 585,965 590,890','8:590,930 602,970 565,1020 538,1072 570,1100 610,1160 605,1195','8:538,1072 525,1160 520,1200','6:24,1260 75,1215','6:40,1345 75,1345','6:95,1390 95,1430',
 '9:228,95 325,100 330,105 335,80 350,60 372,60 360,100 355,165 330,210 330,240 300,270 270,265','9:305,0 310,35 330,65 328,100','9:228,125 253,125 253,95','9:285,95 285,115 302,120 298,210 265,205 250,240','9:268,298 337,298 355,350 385,350 390,333 425,333 430,400 435,427 465,427 465,475 428,477 428,560 450,600','9:262,585 285,580 300,590 370,592 385,600 430,605 485,595','9:465,430 510,440 555,485 558,460 540,440 540,375 550,360 578,360','9:372,60 380,30 440,48 510,22 525,30 578,62','9:525,20 508,0','9:578,62 578,95 557,150 557,185','9:578,62 620,60 635,45 655,10 680,30 720,62 755,50','9:635,45 648,100 628,175 578,175 553,187','9:628,175 690,215 695,240 718,268','9:578,175 575,230 555,262','9:755,50 748,75 748,170 755,190','9:755,50 800,25 820,15','9:578,360 618,385 622,410 612,500 568,520 568,548 600,555 610,575 610,660 585,718','9:630,388 640,440 680,440 738,410','9:612,500 635,520 637,555 650,575 660,530 645,500','9:485,600 515,605 560,548','9:485,600 530,695 555,715 585,718 595,780 595,815','9:412,612 410,710 396,710 396,885','9:412,612 460,610 485,600','9:555,715 515,760 495,810 455,803 420,845 410,840 396,790','9:578,815 595,815 600,845 585,860 575,840 578,815','9:515,930 530,955 550,935 545,915 515,930','9:335,890 345,880 360,903','9:205,35 215,0','9:600,845 612,842'].map(s=>line(s)).join('')}</g>
 <g>${label(7,153,245,55,'France')}${label(7,484,605,102,'România')}${label(7,347,418,272,'Italia')}${label(7,73,171,352,'España')}${label(7,488,569,424,'Ελλάς')}${label(7,667,768,391,'Türkiye')}${label(7,1068,1231,294,"O'zbekiston")}${label(7,980,1168,393,'Türkmenistan')}
 ${label(7,1128,1250,588,'افغانستان')}${label(7,790,861,616,'العراق')}${label(7,973,1030,640,'ایران')}${label(7,1207,1303,716,'پاکستان')}${label(7,120,236,722,'Algérie /')}${label(7,100,255,785,'ⵍⵣⵣⴰⵢⴻⵔ /')}${label(7,141,215,852,'الجزائر')}${label(7,415,466,852,'ليبيا')}${label(7,600,655,838,'مصر')}${label(7,796,904,926,'السعودية')}${label(7,1022,1085,1054,'عمان')}${label(7,1355,1425,996,'India')}
 ${label(7,129,187,1151,'Mali')}${label(7,284,359,1153,'Niger')}${label(7,385,531,1219,'Tchad تشاد')}${label(7,582,678,1219,'السودان')}${label(7,867,933,1216,'اليمن')}${label(7,240,340,1431,'Nigeria')}${label(7,531,707,1465,'South Sudan')}${label(7,731,815,1423,'ኢትዮጵያ')}${label(7,817,975,1515,'Soomaaliya')}
 ${label(9,790,901,62,'الصومال')}${label(9,643,732,174,'Kenya')}${label(9,353,523,218,'République')}${label(9,333,543,270,'démocratique')}${label(9,366,510,323,'du Congo')}${label(9,577,707,327,'Tanzania')}${label(9,324,428,471,'Angola')}${label(9,545,738,647,'Moçambique')}${label(9,287,411,761,'Namibia')}${label(9,366,549,918,'South Africa')}
 ${label(8,173,244,486,'Perú')}${label(8,378,480,663,'Bolivia')}${label(8,629,716,629,'Brasil')}${label(8,446,593,884,'Paraguay')}${label(8,297,452,1460,'Argentina')}</g><circle cx="1330" cy="826" r="4.500" fill="none" stroke="#4f6a92" stroke-width="2.500"/></svg>
 <div class="ov pic">${ic('picture','48x50')}</div>
 <div class="ov btns"><div class="bl">${tx('3D',39,35,0,'color:#3f4f63')}${ic('toggle','42x26',11)}${tx('2D',42,9)}</div><div>${ic('home','43x34')}</div><div>${ic('locate','30x28')}</div><div>${ic('server','36x28')}</div><div>${ic('info','30x30')}</div></div>
 <div class="ov lay">${ic('layers','66x62')}</div><div class="ov sc">${tx('1000 km',105)}</div>
 <div class="ov at">${tx('<b>Leaflet</b> | © <b>OpenStreetMap</b> contributors',478)}</div><div class="ov un">${tx('Unavailable',143)}</div>`);

def('globe-map',`:host{display:block;position:relative;flex:1;overflow:hidden}svg.m{display:block;width:1200px;height:808px}text{font:500 25px "Noto Sans","DejaVu Sans",sans-serif}
 .c{fill:#6a5068}.t{fill:#3d3f3f}.w{fill:#64808e}.halo text{stroke:#a2a6a8;stroke-width:4px;stroke-opacity:.4;paint-order:stroke}
 .ov{position:absolute;display:flex;align-items:center;justify-content:center}.s{left:1000px;top:17px;width:85px;height:80px;background:#222426;border:2px solid #303233;color:#a6b8bb}
 .i{left:1100px;top:17px;width:79px;height:80px;border:2px solid #2b2c2e;border-radius:9px;overflow:hidden;color:#222;font:500 15px "Noto Sans",sans-serif}.i span{position:absolute;left:-8px;top:27px;width:106px;transform:rotate(50deg) scaleX(.76);white-space:nowrap;font-size:12px;text-align:center}.i b{position:absolute;left:17px;bottom:0;line-height:22px;color:#0f6d94;font-size:18px}
 .cr{left:7px;bottom:6px;height:60px;text-shadow:0 0 3px #444,1px 1px 3px #444;color:#bfc3c4;font:bold 24px "Liberation Sans",sans-serif}.cr u{text-underline-offset:4px}`,
 ()=>`<svg class="m" viewBox="40 1008 1200 808"><defs><radialGradient id="g" gradientUnits="userSpaceOnUse" cx="305" cy="1525" r="620"><stop offset="0" stop-color="#a5a9aa"/><stop offset=".25" stop-color="#a0a8aa"/><stop offset=".5" stop-color="#91a2a8"/><stop offset="1" stop-color="#889ea4"/></radialGradient><linearGradient id="l"><stop offset="0" stop-color="#96a4ae" stop-opacity=".9"/><stop offset=".3" stop-color="#96a4ae" stop-opacity="0"/></linearGradient><linearGradient id="q" x1="0" x2="1"><stop offset="0" stop-color="#999591"/><stop offset=".6" stop-color="#8d8a87"/><stop offset="1" stop-color="#858380"/></linearGradient></defs>
 <rect x="40" y="1008" width="1200" height="810" fill="url(#g)"/><rect x="40" y="1008" width="1200" height="810" fill="url(#l)"/>
 <g stroke="#8f9fa9" stroke-opacity=".75" stroke-width="4" stroke-linejoin="round">${land('5:290,40 270,105 285,160 270,205 305,245 345,305 355,370 375,420 430,475 480,525 522,563 570,535 610,520 660,522 710,538 770,500 820,470 900,462 950,480 965,510 985,560 1030,560 1080,550 1110,590 1125,640 1120,700 1110,780 1090,830 1115,910 1160,980 1190,1050 1200,1120 1218,1200 1227,1310 1215,1370 1185,1420 1160,1530 1530,1530 1530,40','url(#q)',.15)}</g>
 <g fill="none" stroke="#857782" stroke-width="3.500">${['5:405,51 415,120 390,150 280,155','5:415,120 420,190 495,180 520,270 510,300 520,340 515,400 490,440 500,490 522,505 522,560','5:285,185 370,180 420,190','5:420,190 440,205 495,180','5:520,270 560,265 590,250 610,270 605,200 635,170 640,130 670,110 710,80 760,100 800,75 830,51','5:605,270 640,290 690,290 685,240 690,235 780,230 800,240 790,290 805,350 800,440','5:690,290 695,350 675,430 680,500 710,535','5:350,375 430,370 440,320','5:430,370 470,430 510,430','5:820,230 850,190 905,200 880,130 905,110 910,170 905,230 905,290 880,350 878,460','5:905,110 960,115 1010,140 1080,155 1130,140 1200,150 1220,51','5:1235,160 1225,300 1190,380 1140,430 1080,495 1080,550','5:1235,160 1270,240 1250,330 1260,380 1325,350','5:1270,480 1275,550 1300,620 1313,700 1230,680 1125,675','5:1313,700 1325,615 1378,610 1380,520 1521,330','5:1172,675 1172,705 1230,710 1240,720 1265,725 1262,880 1210,885 1205,905 1180,905 1160,970','5:1360,610 1365,740 1330,890 1260,990 1195,1040','5:1195,1085 1230,1075 1320,1075 1325,1140 1340,1175 1385,1165 1395,1115 1445,1120 1445,1290 1521,1280','5:1230,680 1230,720','5:1378,610 1521,590'].map(s=>line(s,.3)).join('')}</g>
 <g fill="none" stroke="#84818a" stroke-width="1.500" opacity=".8">${['5:300,100 350,60 400,90','5:440,51 500,90 560,60 640,90','5:460,140 560,200 600,190','5:540,290 550,350 600,340 620,400 680,380','5:540,470 600,480 650,440 690,460','5:700,120 750,190 830,170','5:720,240 725,440','5:750,240 760,300 770,400','5:840,280 845,460','5:940,160 960,240 1050,260 1150,200','5:960,300 1010,380 1000,440 1060,520','5:1100,300 1120,380 1080,430','5:980,51 1000,140','5:1080,51 1085,150','5:1300,51 1310,150 1400,200 1521,180','5:1290,180 1300,300 1400,330','5:1300,400 1350,470 1330,600','5:1130,620 1200,600 1290,640','5:1390,640 1521,700','5:1380,760 1450,700 1521,720','5:1400,820 1440,900 1521,880','5:1350,940 1420,1000 1400,1060 1521,1100','5:1220,1140 1300,1200 1290,1260 1240,1330','5:1320,1240 1400,1180 1440,1230','5:1230,1350 1330,1330 1440,1360 1420,1522','5:1200,1440 1300,1430 1330,1522','5:1450,1380 1521,1420','5:1180,820 1250,850 1330,830','5:460,51 470,150','5:580,60 585,200','5:1010,690 1040,690 1040,740 1010,800 1005,760 1030,700','5:980,850 990,862 980,872 972,860 980,850','5:1080,585 1098,600 1080,630 1068,610 1080,585'].map(s=>line(s,.45)).join('')}</g>
 <g fill="none" stroke="#909aa3" stroke-width="1.500" opacity=".5">${line('5:150,80 120,130 105,140')}${line('5:265,190 262,250 275,275')}</g>
 <g fill="none" stroke="#64899a" stroke-width="3" opacity=".7">${line('5:755,350 790,390 780,460')}${line('5:1370,860 1375,910')}${line('5:935,255 942,275')}${line('5:1232,160 1238,175')}</g>
 <g fill="none" stroke="#4c504c" stroke-width="2.500">${[[522,164],[853,117],[1256,208],[340,321],[420,468],[643,508],[777,500],[825,469],[1173,593],[1111,769],[1286,1000],[1217,1221],[905,452],[1063,196]].map(q=>{const a=at(5,...q);return `<circle cx="${a[0]}" cy="${a[1]}" r="5.500"/><circle cx="${a[0]}" cy="${a[1]}" r="1"/>`}).join('')}</g>
 <g class="halo">${label(5,281,383,124,'Sénégal','class="c" transform="rotate(-4 270 1045)" style="font-size:22px;font-style:italic"')}${label(5,468,582,140,'Bamako','class="t" style="font-size:23px"')}${label(5,797,908,94,'Niamey','class="t" style="font-size:23px"')}${label(5,682,806,161,'Burkina','class="c"')}${label(5,708,780,213,'Faso','class="c"')}${label(5,1268,1338,80,'Tchad','class="c" style="font-size:23px"')}${label(5,1029,1101,240,'Kano','class="t"')}${label(5,1188,1330,274,"N'Djaména",'class="t" style="font-size:23px"')}${label(5,1226,1301,323,'انجمينا','class="t" style="font-size:23px"')}
 ${label(5,411,518,309,'Guinée','class="c"')}${label(5,222,323,345,'Conakry','class="w" style="font-style:italic;font-size:24px"')}${label(5,815,909,332,'Bénin','class="c"')}${label(5,989,1104,352,'Nigeria','class="c"')}${label(5,486,693,422,"Côte d'Ivoire",'class="c"')}${label(5,782,870,441,'Lomé','class="t"')}${label(5,914,1004,473,'Lagos','class="t"')}${label(5,1157,1306,438,'Cameroun','class="c"')}${label(5,1344,1482,415,'Ködörösêse','class="c" style="font-size:23px"')}${label(5,1356,1480,467,'tî Bêafrîka','class="c" style="font-size:23px"')}${label(5,1347,1494,522,'- République','class="c" style="font-size:23px"')}${label(5,1338,1506,573,'Centrafricaine','class="c" style="font-size:23px"')}
 ${label(5,354,487,525,'Monrovia','class="w"')}${label(5,584,702,574,'Abidjan','class="w"')}${label(5,733,819,559,'Accra','class="w"')}${label(5,1110,1232,564,'Yaoundé','class="t"')}${label(5,1043,1173,738,'Libreville','class="t"')}${label(5,1125,1224,849,'Gabon','class="c"')}${label(5,1266,1354,841,'Congo','class="c"')}${label(5,1407,1518,942,'Républiqu','class="c"')}${label(5,1389,1518,998,'démocratiq','class="c" style="font-size:24px"')}${label(5,1411,1516,1048,'du Congo','class="c"')}${label(5,1226,1341,1056,'Kinshasa','class="t"')}${label(5,1163,1262,1277,'Luanda','class="t"')}${label(5,1312,1393,1360,'Angola','class="c" style="font-style:italic;font-size:23px"')}${label(5,1460,1517,1380,'Zamb','class="c" style="font-style:italic;font-size:20px"')}</g></svg>
 <div class="ov s">${ic('search','62x62')}</div><div class="ov i">${ic('tile','80x80')}<span>Valley Creek Blvd.</span><b>P</b></div>
 <div class="ov cr">${ic('cesium','56x58')}${tx('CESIUM',203,6,4,'font-size:43px;-webkit-text-stroke:.5px #bfc3c4')}${tx('ion',58,12,4,'font-size:43px;color:#446f9c')}${tx('Upgrade for commercial use.',343,3,-5)}${tx('<u>Data attribution</u>',184,14,-5)}</div>`);

def('retro-prompt',`:host{position:absolute;left:1357px;top:646px;width:1126px;height:718px;display:flex;overflow:hidden;padding:65px 52px 0 53px}
 .d{display:flex;flex-direction:column;position:relative;width:1021px;height:587px;padding:101px 57px 0 119px;border-radius:50px;color:#008b36;font:45px "DejaVu Sans Mono",monospace;-webkit-text-stroke:1.1px currentColor;
 background:repeating-linear-gradient(180deg,rgba(0,0,0,.16) 0 4px,rgba(0,0,0,0) 5px 9px),linear-gradient(180deg,#04140f 0,#06190f 223px,#0d2715 224px,#0b2416 290px,#071b13 390px,#04160f 100%);
 box-shadow:0 0 90px rgba(0,0,0,.56),inset 0 0 40px 6px rgba(8,14,12,.9)}
 .in{display:flex;align-items:center;width:783px;height:90px;margin-top:180px;background:#007d2f;color:#001008;padding:4px 0 0 32px}.a{text-decoration:underline wavy #e00a0a 2.500px;text-underline-offset:6px}
 .btns{display:flex;justify-content:flex-end;align-items:center;margin-top:37px;gap:35px}.ok{display:flex;align-items:center;width:156px;height:81px;background:#008f35;color:#001008;padding-left:10px}`,
 `<div class="d">${tx('Insert Workspace Name:',415,12)}<div class="in">${tx('<span class="a">AdvancedTutorialTest</span>',380)}</div><div class="btns">${tx('[ CANCEL ]',225)}<div class="ok">${tx('[ OK ]',134)}</div></div></div>`);

def('status-bar',`:host{display:flex;height:118px;background:#2f384a;color:#b2b2b2;font-size:33px;font-weight:300;padding:18px 32px 0 0;align-items:flex-start;justify-content:flex-end}`,
 ic('plug','50x50',0,0)+tx('Waiting',133,76,4)+'<count-badge style="margin:1px 0 0 22px">3</count-badge>'+tx('Running',141,92,4)+'<count-badge style="margin:1px 0 0 22px">0</count-badge>'+ic('list','36x28',117,8));

def('wasdi-app',`:host{display:flex;flex-direction:column;position:relative;width:3840px;height:1973px;overflow:hidden}
 .top{display:flex;gap:38px;padding:25px 0 0 38px;height:281px}.col{display:flex;flex-direction:column;gap:19px}.r{display:flex}.r tool-bar{margin-left:572px}
 .main{display:flex;padding:34px 0 0 38px;gap:76px;height:1484px;align-items:flex-start}.side{display:flex;flex-direction:column;gap:37px}
 .tip{position:absolute;left:3px;top:1968px;width:16px;height:16px;border-radius:3px;background:#b2b2b2;transform:rotate(45deg)}`,
 `<browser-bar></browser-bar><div class="top"><brand-logo></brand-logo><div class="col"><top-nav></top-nav><div class="r"><filter-bar></filter-bar><tool-bar></tool-bar></div></div></div>
 <div class="main"><div class="side"><side-card style="height:463px"><products-head slot="head"></products-head><products-body></products-body></side-card><side-card style="height:913px"><nav-head slot="head"></nav-head><globe-map></globe-map></side-card></div><world-map></world-map></div>
 <status-bar></status-bar><retro-prompt></retro-prompt><div class="tip"></div>`);
fitted.forEach(f=>f.fit());document.fonts.ready.then(()=>fitted.forEach(f=>f.fit()));
</script></body></html>
